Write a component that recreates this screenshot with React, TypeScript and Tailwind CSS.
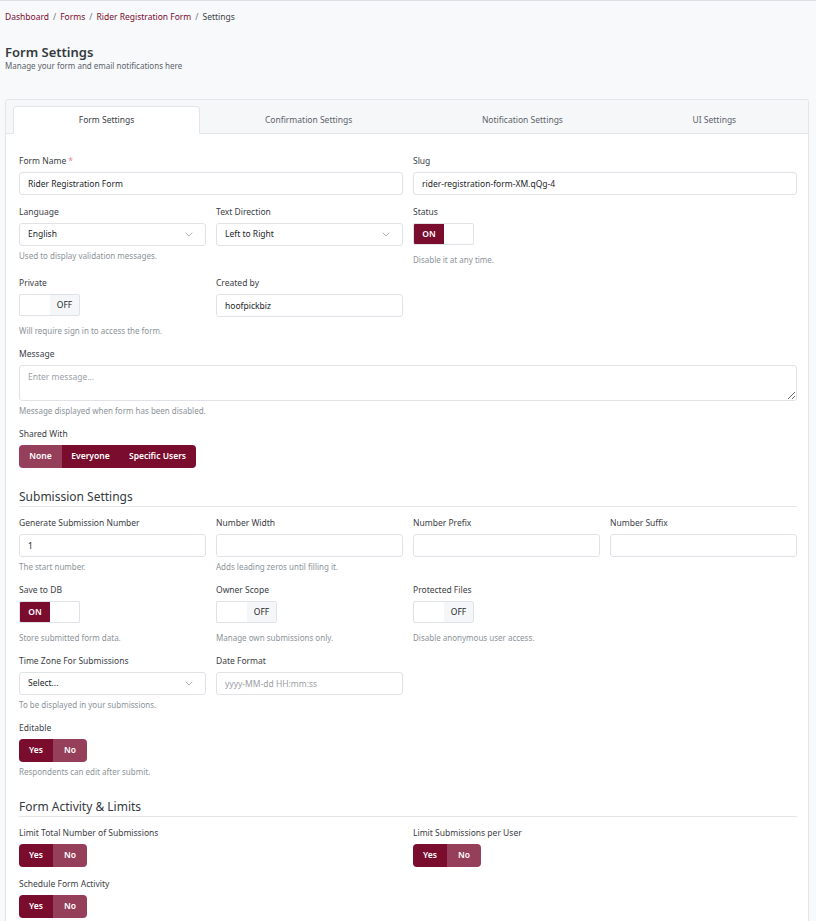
import React from 'react';

const font = { fontFamily: '"Noto Sans", "Open Sans", sans-serif' };

const Label = ({ children, required }: { children: React.ReactNode; required?: boolean }) => (
  <div className="text-[8.5px] leading-[12px] text-[#3b4046] mb-[5px] whitespace-nowrap">
    {children}
    {required && <span className="text-[#e0828f] ml-[2px]">*</span>}
  </div>
);

const Help = ({ children, extra }: { children: React.ReactNode; extra?: boolean }) => (
  <div className={`text-[8px] leading-[12px] text-[#8c9399] whitespace-nowrap ${extra ? 'mt-[9px]' : 'mt-[4px]'}`}>
    {children}
  </div>
);

const TextInput = ({ value, placeholder }: { value?: string; placeholder?: string }) => (
  <input
    readOnly
    value={value ?? ''}
    placeholder={placeholder}
    className="block w-full h-[23px] px-[8px] text-[8.5px] text-[#212529] placeholder:text-[#9aa0a6] bg-white border border-[#dfe2e6] rounded-[3px] outline-none"
    style={font}
  />
);

const Chevron = () => (
  <svg width="8" height="5" viewBox="0 0 8 5" fill="none" className="text-[#a4a9ae]">
    <path d="M1 1l3 3 3-3" stroke="currentColor" strokeWidth="0.9" strokeLinecap="round" strokeLinejoin="round" />
  </svg>
);

const SelectBox = ({ value }: { value: string }) => (
  <div className="flex items-center justify-between h-[23px] pl-[8px] pr-[12px] bg-white border border-[#dfe2e6] rounded-[3px]">
    <span className="text-[8.5px] text-[#212529]">{value}</span>
    <Chevron />
  </div>
);

const Toggle = ({ on }: { on?: boolean }) => (
  <div className="flex w-[61px] h-[22px] border border-[#dfe2e6] rounded-[2px] overflow-hidden bg-white">
    {on ? (
      <>
        <div className="w-[30px] flex items-center justify-center bg-[#7a0c2e] text-white text-[8.5px] font-semibold">ON</div>
        <div className="flex-1" />
      </>
    ) : (
      <>
        <div className="w-[30px]" />
        <div className="flex-1 flex items-center justify-center bg-[#f5f6f8] text-[#212529] text-[8.5px]">OFF</div>
      </>
    )}
  </div>
);

const YesNo = () => (
  <div className="flex w-[68px] h-[23px] rounded-[4px] overflow-hidden text-white text-[8.5px] font-semibold">
    <div className="flex-1 flex items-center justify-center bg-[#7a0c2e]">Yes</div>
    <div className="flex-1 flex items-center justify-center bg-[#953f5b]">No</div>
  </div>
);

const SectionTitle = ({ children }: { children: React.ReactNode }) => (
  <div className="mt-[21px] mb-[10px] pb-[1px] border-b border-[#e3e5e8] text-[12px] leading-[16px] text-[#343a40]">
    {children}
  </div>
);

const Field = ({ className, children }: { className?: string; children: React.ReactNode }) => (
  <div className={`mb-[11px] ${className ?? ''}`}>{children}</div>
);

const tabs = ['Form Settings', 'Confirmation Settings', 'Notification Settings', 'UI Settings'];

export default function App() {
  return (
    <div className="min-h-[921px] bg-[#f8f9fb] border-t border-[#dcdfe3] pl-[5px] pr-[7px] pt-[10px]" style={font}>
      {/* Breadcrumb */}
      <div className="text-[8.5px] leading-[12px] flex items-center gap-[4px]">
        <span className="text-[#7a0c2e]">Dashboard</span>
        <span className="text-[#6c757d]">/</span>
        <span className="text-[#7a0c2e]">Forms</span>
        <span className="text-[#6c757d]">/</span>
        <span className="text-[#7a0c2e]">Rider Registration Form</span>
        <span className="text-[#6c757d]">/</span>
        <span className="text-[#3b4046]">Settings</span>
      </div>

      <div className="mt-[21px] text-[13px] leading-[16px] font-semibold text-[#343a40]">Form Settings</div>
      <div className="text-[8px] leading-[12px] text-[#5c636a]">Manage your form and email notifications here</div>

      {/* Card */}
      <div className="mt-[27px] bg-white border border-[#e3e5e8] rounded-[3px]">
        <div className="flex bg-[#f6f7f9] pt-[6px] pl-[7px] pr-[7px] border-b border-[#e3e5e8] rounded-t-[3px]">
          {tabs.map((t, i) => (
            <div
              key={t}
              className={`flex-auto h-[28px] flex items-center justify-center text-[8.5px] -mb-px ${
                i === 0
                  ? 'bg-white border border-[#e3e5e8] border-b-white rounded-t-[4px] text-[#3b4046]'
                  : 'text-[#5c636a]'
              }`}
            >
              {t}
            </div>
          ))}
        </div>

        <div className="pl-[13px] pr-[11px] pt-[21px]">
          <div className="grid grid-cols-4 gap-x-[10px]">
            <Field className="col-span-2">
              <Label required>Form Name</Label>
              <TextInput value="Rider Registration Form" />
            </Field>
            <Field className="col-span-2">
              <Label>Slug</Label>
              <TextInput value="rider-registration-form-XM.qQg-4" />
            </Field>
          </div>

          <div className="grid grid-cols-4 gap-x-[10px]">
            <Field>
              <Label>Language</Label>
              <SelectBox value="English" />
              <Help>Used to display validation messages.</Help>
            </Field>
            <Field>
              <Label>Text Direction</Label>
              <SelectBox value="Left to Right" />
            </Field>
            <Field>
              <Label>Status</Label>
              <Toggle on />
              <Help extra>Disable it at any time.</Help>
            </Field>
          </div>

          <div className="grid grid-cols-4 gap-x-[10px]">
            <Field>
              <Label>Private</Label>
              <Toggle />
              <Help extra>Will require sign in to access the form.</Help>
            </Field>
            <Field>
              <Label>Created by</Label>
              <TextInput value="hoofpickbiz" />
            </Field>
          </div>

          <Field>
            <Label>Message</Label>
            <textarea
              readOnly
              placeholder="Enter message..."
              className="block w-full h-[36px] px-[8px] py-[5px] text-[8.5px] leading-[12px] placeholder:text-[#9aa0a6] border border-[#dfe2e6] rounded-[3px] outline-none resize-y"
              style={font}
            />
            <Help>Message displayed when form has been disabled.</Help>
          </Field>

          <Field>
            <Label>Shared With</Label>
            <div className="flex w-fit h-[23px] rounded-[4px] overflow-hidden text-white text-[8.5px] font-semibold">
              <div className="w-[43px] flex items-center justify-center bg-[#953f5b]">None</div>
              <div className="w-[57px] flex items-center justify-center bg-[#7a0c2e]">Everyone</div>
              <div className="w-[77px] flex items-center justify-center bg-[#7a0c2e]">Specific Users</div>
            </div>
          </Field>

          <SectionTitle>Submission Settings</SectionTitle>

          <div className="grid grid-cols-4 gap-x-[10px]">
            <Field>
              <Label>Generate Submission Number</Label>
              <TextInput value="1" />
              <Help>The start number.</Help>
            </Field>
            <Field>
              <Label>Number Width</Label>
              <TextInput />
              <Help>Adds leading zeros until filling it.</Help>
            </Field>
            <Field>
              <Label>Number Prefix</Label>
              <TextInput />
            </Field>
            <Field>
              <Label>Number Suffix</Label>
              <TextInput />
            </Field>
          </div>

          <div className="grid grid-cols-4 gap-x-[10px]">
            <Field>
              <Label>Save to DB</Label>
              <Toggle on />
              <Help extra>Store submitted form data.</Help>
            </Field>
            <Field>
              <Label>Owner Scope</Label>
              <Toggle />
              <Help extra>Manage own submissions only.</Help>
            </Field>
            <Field>
              <Label>Protected Files</Label>
              <Toggle />
              <Help extra>Disable anonymous user access.</Help>
            </Field>
          </div>

          <div className="grid grid-cols-4 gap-x-[10px]">
            <Field>
              <Label>Time Zone For Submissions</Label>
              <SelectBox value="Select..." />
              <Help>To be displayed in your submissions.</Help>
            </Field>
            <Field>
              <Label>Date Format</Label>
              <TextInput placeholder="yyyy-MM-dd HH:mm:ss" />
            </Field>
          </div>

          <Field>
            <Label>Editable</Label>
            <YesNo />
            <Help>Respondents can edit after submit.</Help>
          </Field>

          <SectionTitle>Form Activity &amp; Limits</SectionTitle>

          <div className="grid grid-cols-4 gap-x-[10px]">
            <Field className="col-span-2">
              <Label>Limit Total Number of Submissions</Label>
              <YesNo />
            </Field>
            <Field className="col-span-2">
              <Label>Limit Submissions per User</Label>
              <YesNo />
            </Field>
          </div>

          <Field>
            <Label>Schedule Form Activity</Label>
            <YesNo />
          </Field>
        </div>
      </div>
    </div>
  );
}
